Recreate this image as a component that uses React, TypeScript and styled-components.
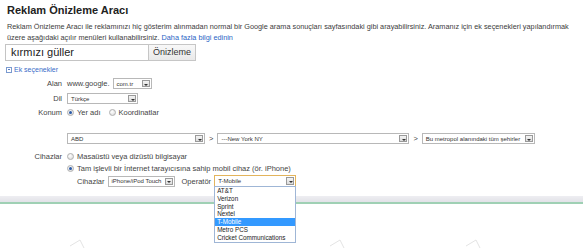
import React from "react";
import styled, { createGlobalStyle } from "styled-components";

const Global = createGlobalStyle`
  html, body { margin: 0; padding: 0; background: #fff; }
  body { font-family: "Liberation Sans", Arial, sans-serif; color: #333; }
  * { box-sizing: border-box; }
`;

const Page = styled.div`
  position: relative;
  width: 583px;
  height: 249px;
  overflow: hidden;
  background: #fff;
`;

const Content = styled.div`
  padding: 4px 0 0 7px;
`;

const Title = styled.h1`
  margin: 0;
  font-size: 11px;
  line-height: 12px;
  font-weight: bold;
  color: #222;
`;

const Desc = styled.div`
  margin: 6px 0 0;
  font-size: 7.3px;
  line-height: 10.5px;
  color: #3c3c3c;
`;

const DescLine = styled.div`
  white-space: nowrap;
`;

const Link = styled.a`
  color: #2a64c5;
  text-decoration: none;
`;

const SearchRow = styled.div`
  display: flex;
  margin: 1px 0 0 -2px;
  height: 17px;
`;

const SearchInput = styled.div`
  width: 143px;
  height: 17px;
  border: 1px solid #c4c4c4;
  border-right: none;
  font-size: 11px;
  line-height: 15px;
  padding-left: 5px;
  color: #222;
`;

const SearchButton = styled.div`
  width: 48px;
  height: 17px;
  border: 1px solid #c6c6c6;
  background: linear-gradient(#f8f8f8, #e9e9e9);
  font-size: 9px;
  line-height: 15px;
  text-align: center;
  color: #333;
`;

const Toggle = styled.div`
  display: flex;
  align-items: center;
  gap: 2px;
  margin: 4px 0 0 -1px;
  font-size: 7px;
  line-height: 9px;
  color: #3a6cc8;
`;

const ToggleBox = styled.span`
  position: relative;
  width: 6px;
  height: 6px;
  border: 1px solid #7a9ad0;
  &::after {
    content: "";
    position: absolute;
    left: 1px;
    right: 1px;
    top: 1.5px;
    height: 1px;
    background: #5a7ec0;
  }
`;

const Form = styled.div`
  display: grid;
  grid-template-columns: 55px 1fr;
  column-gap: 5px;
  align-items: center;
  margin-top: 4px;
  font-size: 7.5px;
  color: #444;
`;

const Label = styled.div<{ $mt?: number }>`
  text-align: right;
  align-self: start;
  line-height: 11px;
  margin-top: ${(p) => p.$mt ?? 0}px;
`;

const Cell = styled.div<{ $mt?: number }>`
  display: flex;
  align-items: center;
  gap: 3px;
  min-height: 11px;
  margin-top: ${(p) => p.$mt ?? 0}px;
  white-space: nowrap;
`;

const Stack = styled.div<{ $mt?: number }>`
  display: flex;
  flex-direction: column;
  gap: 1px;
  margin-top: ${(p) => p.$mt ?? 0}px;
`;

const SelBox = styled.div<{ $w: number; $focus?: boolean }>`
  position: relative;
  display: flex;
  align-items: center;
  width: ${(p) => p.$w}px;
  height: ${(p) => (p.$focus ? 12 : 11)}px;
  border: 1px solid ${(p) => (p.$focus ? "#e3b45c" : "#b8b8b8")};
  background: #fff;
  font-size: 6px;
  color: #333;
  padding-left: 3px;
  white-space: nowrap;
`;

const SelArrow = styled.span`
  position: absolute;
  right: 1px;
  top: 1px;
  bottom: 1px;
  width: 8px;
  border: 1px solid #9a9a9a;
  background: linear-gradient(#f4f4f4, #dcdcdc);
  &::after {
    content: "";
    position: absolute;
    left: 1.5px;
    top: 2.5px;
    border-left: 2px solid transparent;
    border-right: 2px solid transparent;
    border-top: 2px solid #333;
  }
`;

const Sel = ({ w, text, focus }: { w: number; text: string; focus?: boolean }) => (
  <SelBox $w={w} $focus={focus}>
    {text}
    <SelArrow />
  </SelBox>
);

const Radio = styled.span<{ $on?: boolean }>`
  position: relative;
  display: inline-block;
  width: 7px;
  height: 7px;
  border-radius: 50%;
  border: 1px solid #b0b0b0;
  background: radial-gradient(circle at 40% 35%, #fff, #d6d6d6);
  &::after {
    content: "";
    display: ${(p) => (p.$on ? "block" : "none")};
    position: absolute;
    left: 1px;
    top: 1px;
    width: 3px;
    height: 3px;
    border-radius: 50%;
    background: #2a5aa8;
  }
`;

const RadioText = styled.span`
  margin-right: 5px;
`;

const Gt = styled.span`
  margin: 0 1px;
`;

const SubRow = styled.div`
  display: flex;
  align-items: center;
  gap: 3px;
  margin-left: 10px;
  position: relative;
`;

const OpLabel = styled.span`
  margin-left: 4px;
`;

const Band = styled.div`
  margin-top: 9px;
  height: 8px;
  background: linear-gradient(#eeeef2, #e2e2e8);
  border-bottom: 2px solid #9fd0b4;
`;

const OperatorWrap = styled.div`
  position: relative;
`;

const DropList = styled.ul`
  position: absolute;
  left: 0;
  top: 11px;
  width: 82px;
  margin: 0;
  padding: 0;
  list-style: none;
  background: #fff;
  border: 1px solid #9fb6d6;
  z-index: 5;
`;

const DropItem = styled.li<{ $sel?: boolean }>`
  height: 7.8px;
  line-height: 7.8px;
  font-size: 6.3px;
  padding-left: 2px;
  color: ${(p) => (p.$sel ? "#fff" : "#222")};
  background: ${(p) => (p.$sel ? "#3399ff" : "transparent")};
`;

const Watermark = styled.svg`
  display: block;
  margin-top: 28px;
`;

const operators = ["AT&T", "Verizon", "Sprint", "Nextel", "T-Mobile", "Metro PCS", "Cricket Communications"];

export default function App() {
  return (
    <Page>
      <Global />
      <Content>
        <Title>Reklam Önizleme Aracı</Title>
        <Desc>
          <DescLine>
            Reklam Önizleme Aracı ile reklamınızı hiç gösterim alınmadan normal bir Google arama sonuçları
            sayfasındaki gibi arayabilirsiniz. Aramanız için ek seçenekleri yapılandırmak
          </DescLine>
          <DescLine>
            üzere aşağıdaki açılır menüleri kullanabilirsiniz. <Link>Daha fazla bilgi edinin</Link>
          </DescLine>
        </Desc>
        <SearchRow>
          <SearchInput>kırmızı güller</SearchInput>
          <SearchButton>Önizleme</SearchButton>
        </SearchRow>
        <Toggle>
          <ToggleBox />
          Ek seçenekler
        </Toggle>
        <Form>
          <Label>Alan</Label>
          <Cell>
            www.google.
            <Sel w={39} text="com.tr" />
          </Cell>

          <Label $mt={4}>Dil</Label>
          <Cell $mt={4}>
            <Sel w={71} text="Türkçe" />
          </Cell>

          <Label $mt={3}>Konum</Label>
          <Cell $mt={3}>
            <Radio $on />
            <RadioText>Yer adı</RadioText>
            <Radio />
            <RadioText>Koordinatlar</RadioText>
          </Cell>

          <span />
          <Cell $mt={15}>
            <Sel w={138} text="ABD" />
            <Gt>&gt;</Gt>
            <Sel w={192} text="---New York NY" />
            <Gt>&gt;</Gt>
            <Sel w={113} text="Bu metropol alanındaki tüm şehirler" />
          </Cell>

          <Label $mt={7}>Cihazlar</Label>
          <Stack $mt={7}>
            <Cell>
              <Radio />
              <RadioText>Masaüstü veya dizüstü bilgisayar</RadioText>
            </Cell>
            <Cell>
              <Radio $on />
              <RadioText>Tam işlevli bir İnternet tarayıcısına sahip mobil cihaz (ör. iPhone)</RadioText>
            </Cell>
            <SubRow>
              Cihazlar
              <Sel w={67} text="iPhone/iPod Touch" />
              <OpLabel>Operatör</OpLabel>
              <OperatorWrap>
                <Sel w={82} text="T-Mobile" focus />
                <DropList>
                  {operators.map((o) => (
                    <DropItem key={o} $sel={o === "T-Mobile"}>
                      {o}
                    </DropItem>
                  ))}
                </DropList>
              </OperatorWrap>
            </SubRow>
          </Stack>
        </Form>
      </Content>
      <Band />
      <Watermark width="583" height="20" viewBox="0 0 583 20">
        <g stroke="#e4e4e4" strokeWidth="1" fill="none">
          <path d="M70 14 L80 8 L84 16" />
          <path d="M330 14 L340 8 L344 16" />
          <path d="M466 14 L476 8 L480 16" />
        </g>
      </Watermark>
    </Page>
  );
}
